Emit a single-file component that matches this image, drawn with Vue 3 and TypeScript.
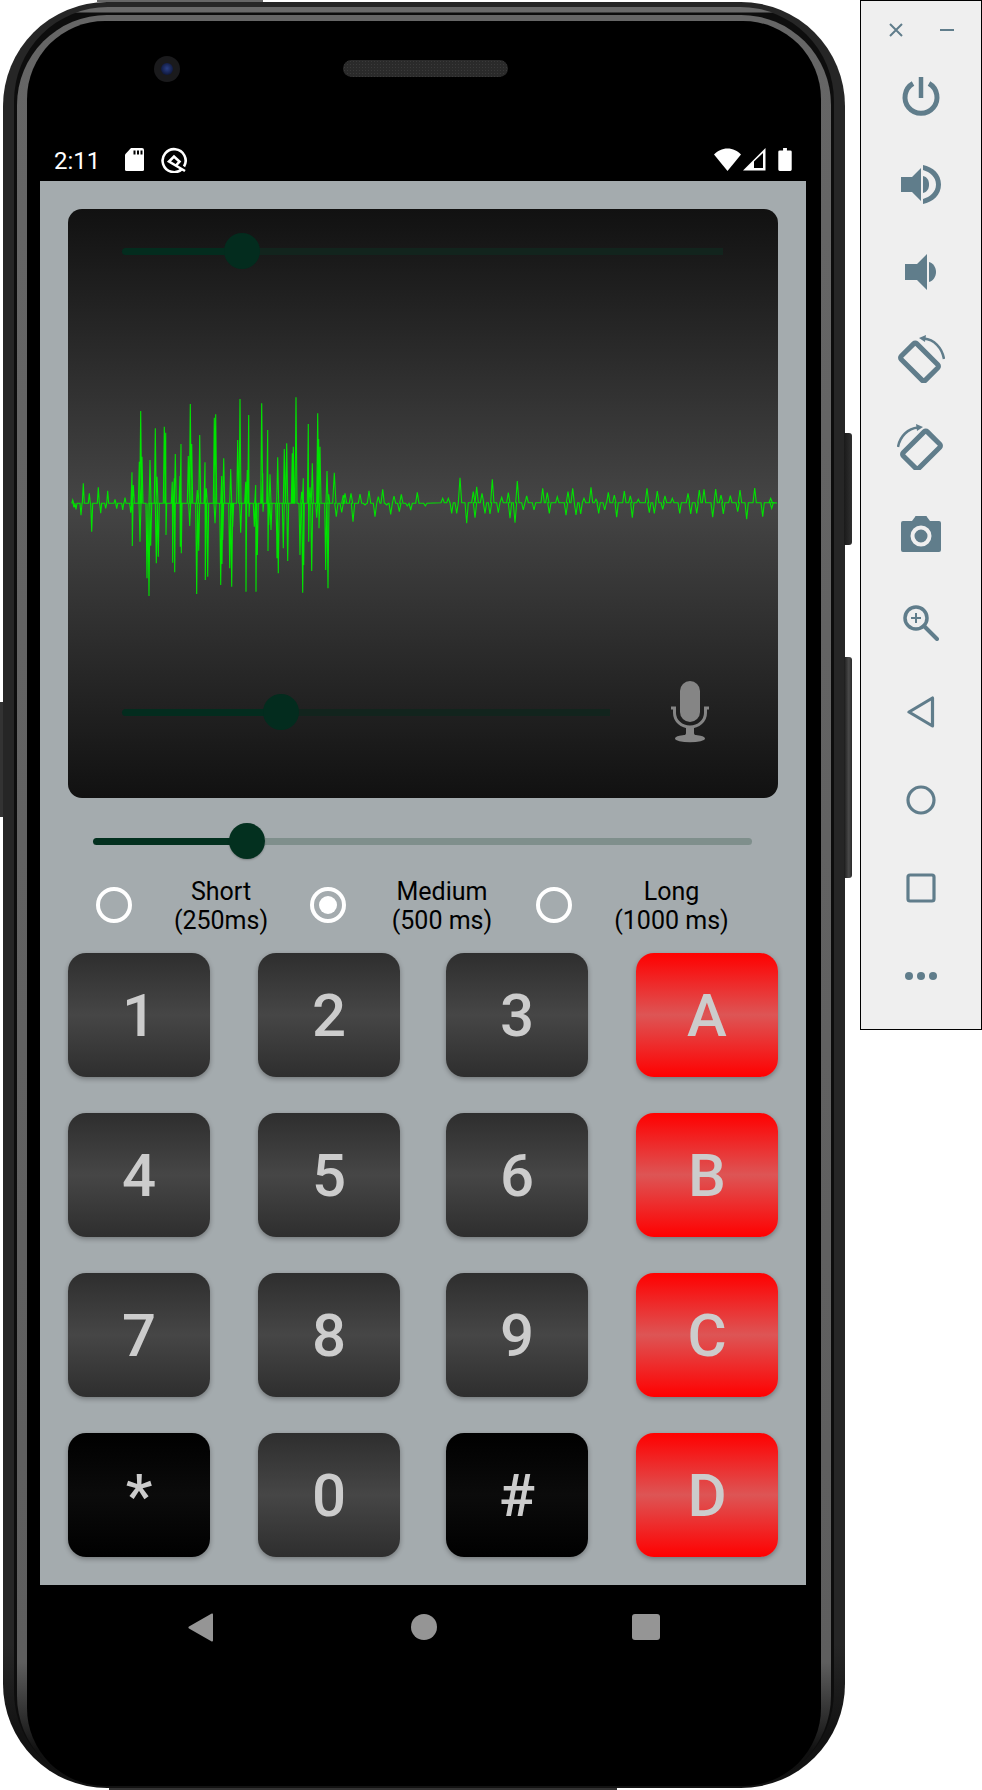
<script setup lang="ts">
// x, then one or more y values of the peak, units are 1/3 px of the capture
type Spike = [number, ...number[]]

const keys = [
  { label: '1', kind: 'dark' }, { label: '2', kind: 'dark' }, { label: '3', kind: 'dark' }, { label: 'A', kind: 'red' },
  { label: '4', kind: 'dark' }, { label: '5', kind: 'dark' }, { label: '6', kind: 'dark' }, { label: 'B', kind: 'red' },
  { label: '7', kind: 'dark' }, { label: '8', kind: 'dark' }, { label: '9', kind: 'dark' }, { label: 'C', kind: 'red' },
  { label: '*', kind: 'black' }, { label: '0', kind: 'dark' }, { label: '#', kind: 'black' }, { label: 'D', kind: 'red' },
]

const durations = [
  { top: 'Short', bottom: '(250ms)', selected: false },
  { top: 'Medium', bottom: '(500 ms)', selected: true },
  { top: 'Long', bottom: '(1000 ms)', selected: false },
]

const burst: Spike[] = [
  [38, 390], [42, 412], [48, 418], [63, 436], [70, 340], [88, 370], [95, 485], [115, 352], [122, 430], [137, 415], [143, 362], [165, 388], [170, 416], [188, 420], [195, 383],
  [212, 428], [216, 307, 528], [220, 345], [238, 275], [240, 515], [242, 123], [246, 260], [261, 625], [267, 678], [270, 270], [272, 527], [286, 175], [289, 580], [291, 320], [295, 560], [313, 170], [317, 188, 495],
  [337, 335, 578], [343, 325, 607], [346, 252], [360, 318, 530], [363, 222, 550], [385, 258], [389, 468], [391, 102], [395, 222], [410, 672], [412, 360], [416, 542], [419, 195], [435, 277, 630], [439, 355], [443, 620],
  [463, 143], [465, 460], [467, 133], [482, 645], [485, 318, 582], [488, 510], [491, 265], [509, 595], [512, 297], [515, 650], [518, 470], [533, 210], [540, 87], [542, 488], [557, 335, 665], [562, 300], [566, 135, 440],
  [583, 470], [587, 345, 665], [592, 555], [605, 100], [608, 310, 425], [623, 180, 543], [626, 465], [630, 313], [633, 480], [650, 490, 565], [653, 262], [655, 610], [670, 535], [673, 237], [680, 220], [683, 573], [697, 250], [700, 230], [708, 82],
  [720, 555], [725, 365], [728, 668], [730, 325, 585], [745, 162, 515], [750, 352], [755, 603], [757, 280], [770, 443], [773, 130], [776, 207, 475], [780, 230], [797, 600], [801, 303], [804, 655], [806, 373],
]
const ripple: Spike[] = [
  [823, 308], [829, 440], [845, 427], [850, 375], [855, 370], [873, 370], [879, 455], [900, 372], [915, 405], [927, 362], [945, 440], [955, 380], [968, 358], [980, 405], [992, 433], [1002, 378], [1018, 425], [1024, 373], [1042, 408], [1052, 420], [1072, 367], [1096, 408],
]
const tail: Spike[] = [
  [8, 175], [25, 175], [35, 220], [50, 220], [60, 113], [80, 250], [100, 155], [105, 233], [110, 140], [126, 160], [135, 220], [150, 222], [157, 118], [175, 218], [185, 172], [205, 158], [210, 235], [225, 248], [232, 123], [250, 210], [260, 168], [282, 210], [308, 145], [322, 158], [328, 220], [352, 170], [378, 226], [384, 155], [398, 145], [408, 225], [422, 222], [432, 175], [453, 142], [468, 178], [476, 220], [494, 210], [505, 157], [523, 165], [530, 232], [553, 153], [571, 168], [577, 233], [595, 178], [621, 145], [628, 218], [643, 220], [652, 153], [668, 208], [675, 168], [697, 175], [719, 220], [744, 160], [752, 222], [770, 220], [778, 150], [792, 148], [818, 232], [827, 147], [843, 165], [850, 222], [871, 167], [893, 215], [900, 150], [920, 238], [944, 144], [968, 230], [992, 175], [995, 205],
]

function trace(list: Spike[], originX: number, originY: number, baseY: number, half: number) {
  const pts: string[] = []
  const px = (x: number) => (originX + x / 3 - 68).toFixed(1)
  const py = (y: number) => (originY + y / 3 - 380).toFixed(1)
  for (const [x, ...ys] of list) {
    pts.push(`${px(x - half)},${py(baseY)}`)
    ys.forEach((y, i) => pts.push(`${px(x + i)},${py(y)}`))
    pts.push(`${px(x + half)},${py(baseY)}`)
  }
  return pts
}

const wavePoints = [
  ...trace(burst, 60, 370, 400, 3),
  ...trace(ripple, 60, 370, 400, 5),
  ...trace(tail, 440, 440, 188, 5),
  '709,123',
].join(' ')
</script>

<template>
  <div class="page">
    <div class="phone">
      <span class="side-btn btn-left"></span>
      <span class="side-btn btn-power"></span>
      <span class="side-btn btn-volume"></span>
      <span class="edge edge-top"></span>
      <span class="edge edge-bottom"></span>
      <div class="rim">
        <div class="bezel">
          <div class="face">
            <div class="top-area">
              <div class="camera"><span class="lens"></span></div>
              <div class="speaker"></div>
            </div>

            <!-- status bar -->
            <div class="status-bar">
              <div class="status-left">
                <span class="clock">2:11</span>
                <svg class="sd-icon" width="19" height="23" viewBox="0 0 19 23">
                  <path d="M6 0h11a2 2 0 0 1 2 2v19.500a1.500 1.500 0 0 1-1.500 1.500h-16a1.500 1.500 0 0 1-1.500-1.500V6.500z" fill="#fff"/>
                  <path d="M8.500 2.500h2v4h-2zM12 2.500h2v4h-2zM15.500 2.500h2v4h-2z" fill="#000"/>
                </svg>
                <svg width="26" height="26" viewBox="0 0 26 26" fill="none" stroke="#fff" stroke-width="2.600">
                  <path d="M21 22A11.500 11.500 0 1 1 23 19.500"/>
                  <path d="M24 24 8 14.500 13 9.500l5.500 5-3.500 4"/>
                </svg>
              </div>
              <div class="status-right">
                <svg width="27" height="23" viewBox="0 0 27 23"><path d="M13.500 23 0 6.500C3.500 3 8 .5 13.500.5S23.500 3 27 6.500z" fill="#fff"/></svg>
                <svg width="23" height="23" viewBox="0 0 23 23">
                  <path d="M0 22.500 22.500 0v22.500z" fill="#fff"/>
                  <path d="M11 20V13.500L20 5v15z" fill="#000"/>
                </svg>
                <svg width="14" height="23" viewBox="0 0 14 24">
                  <path d="M5 0h4v2.500h3.500A1.500 1.500 0 0 1 14 4v18.500a1.500 1.500 0 0 1-1.500 1.500h-11A1.500 1.500 0 0 1 0 22.500V4a1.500 1.500 0 0 1 1.500-1.500H5z" fill="#fff"/>
                </svg>
              </div>
            </div>

            <!-- app screen -->
            <div class="screen">
              <div class="scope">
                <div class="scope-slider top-slider">
                  <div class="track-fill fill-top"></div>
                  <div class="thumb"></div>
                  <div class="track-rest"></div>
                </div>
                <svg class="wave" width="709" height="240" viewBox="0 0 709 240">
                  <polyline :points="wavePoints" fill="none" stroke="#00e400" stroke-width="1.1"/>
                </svg>
                <div class="scope-bottom">
                  <div class="scope-slider bottom-slider">
                    <div class="track-fill fill-bottom"></div>
                    <div class="thumb"></div>
                    <div class="track-rest"></div>
                  </div>
                  <svg class="mic" width="40" height="62" viewBox="0 0 40 62">
                    <rect x="10" y="0" width="20" height="41" rx="10" fill="#858585"/>
                    <path d="M1 27h3.500v5a15.500 14 0 0 0 31 0v-5H39" fill="none" stroke="#858585" stroke-width="3"/>
                    <path d="M16 46h8v6c0 1.500 1 2 3 3H13c2-1 3-1.500 3-3z" fill="#858585"/>
                    <ellipse cx="20" cy="57.500" rx="15" ry="3.800" fill="#858585"/>
                  </svg>
                </div>
              </div>

              <div class="main-slider">
                <div class="main-fill"></div>
                <div class="main-thumb"></div>
                <div class="main-rest"></div>
              </div>

              <div class="radio-row">
                <div v-for="d in durations" :key="d.top" class="radio-item">
                  <span class="radio" :class="{ on: d.selected }"></span>
                  <span class="radio-label">{{ d.top }}<br>{{ d.bottom }}</span>
                </div>
              </div>

              <div class="keypad">
                <button v-for="k in keys" :key="k.label" type="button" class="key" :class="`key-${k.kind}`">{{ k.label }}</button>
              </div>
            </div>

            <!-- nav bar -->
            <div class="nav-bar">
              <svg width="26" height="29" viewBox="0 0 26 29"><path d="M25 1.500v26a1 1 0 0 1-1.700.7L1 15.500a1.300 1.300 0 0 1 0-2L23.300.800a1 1 0 0 1 1.700.7z" fill="#959595"/></svg>
              <span class="nav-dot"></span>
              <span class="nav-square"></span>
            </div>
          </div>
        </div>
      </div>
    </div>

    <!-- emulator toolbar -->
    <aside class="toolbar">
      <div class="win-row">
        <svg width="16" height="16" viewBox="0 0 16 16" stroke="#607d8b" stroke-width="2"><path d="M2 2l12 12M14 2 2 14"/></svg>
        <svg width="16" height="16" viewBox="0 0 16 16" stroke="#607d8b" stroke-width="2"><path d="M1 8h14"/></svg>
      </div>
      <div class="tools">
        <svg width="40" height="40" viewBox="0 0 40 40" fill="none" stroke="#607d8b" stroke-width="5">
          <path d="M12 7.500a16 16 0 1 0 16 0"/><path d="M20 1v21" stroke-width="4.500"/>
        </svg>
        <svg width="40" height="40" viewBox="0 0 40 40" fill="#607d8b">
          <path d="M0 13h11L20 4v33l-9-9H0z"/>
          <path d="M22 12c4 1 6 4 6 8.500s-2 7.500-6 8.500z"/>
          <path d="M22 1c10 2 18 9 18 19.500S32 38 22 40v-5c7-2 13-7 13-14.500S29 8 22 6z"/>
        </svg>
        <svg width="40" height="40" viewBox="0 0 40 40" fill="#607d8b">
          <path d="M4 12h12L26 2v36L16 28H4z"/>
          <path d="M28 10c4 1 7 5 7 10s-3 9-7 10z"/>
        </svg>
        <svg width="48" height="48" viewBox="0 0 48 48" fill="none" stroke="#607d8b">
          <rect x="11.500" y="10" width="22" height="34" rx="2" transform="rotate(-45 22.500 27)" stroke-width="5"/>
          <path d="M27 3.500c10 1 18 9 20 20.500" stroke-width="2.500"/>
          <path d="M22 3l7-3-1 7z" fill="#607d8b" stroke="none"/>
        </svg>
        <svg width="48" height="48" viewBox="0 0 48 48" fill="none" stroke="#607d8b">
          <rect x="13.500" y="11" width="22" height="34" rx="2" transform="rotate(45 24.500 28)" stroke-width="5"/>
          <path d="M21 5.500C11 6.500 3 14 1 25" stroke-width="2.500"/>
          <path d="M26 5l-7-3 1 7z" fill="#607d8b" stroke="none"/>
        </svg>
        <svg width="40" height="36" viewBox="0 0 40 36">
          <path d="M2 5h9l3-4a1 1 0 0 1 1-1h10a1 1 0 0 1 1 1l3 4h9a2 2 0 0 1 2 2v27a2 2 0 0 1-2 2H2a2 2 0 0 1-2-2V7a2 2 0 0 1 2-2z" fill="#607d8b"/>
          <circle cx="20" cy="20" r="8.500" fill="none" stroke="#efefef" stroke-width="4"/>
        </svg>
        <svg width="36" height="36" viewBox="0 0 36 36" fill="none" stroke="#607d8b">
          <circle cx="13" cy="13" r="11" stroke-width="3.500"/>
          <path d="M21 21l13 13" stroke-width="4" stroke-linecap="round"/>
          <path d="M8 13h10M13 8v10" stroke-width="2"/>
        </svg>
        <svg width="28" height="32" viewBox="0 0 28 32" fill="none" stroke="#607d8b" stroke-width="3.200" stroke-linejoin="round"><path d="M25.500 2v28L2 16z"/></svg>
        <svg width="30" height="30" viewBox="0 0 30 30" fill="none" stroke="#607d8b" stroke-width="3.200"><circle cx="15" cy="15" r="13"/></svg>
        <svg width="30" height="30" viewBox="0 0 30 30" fill="none" stroke="#607d8b" stroke-width="3.200"><rect x="2" y="2" width="26" height="26" rx="2"/></svg>
        <svg width="34" height="10" viewBox="0 0 34 10" fill="#607d8b"><circle cx="5" cy="5" r="4"/><circle cx="17" cy="5" r="4"/><circle cx="29" cy="5" r="4"/></svg>
      </div>
    </aside>
  </div>
</template>

<style scoped>
.page {
  width: 982px;
  height: 1790px;
  position: relative;
  background: #fff;
  font-family: Roboto, "Liberation Sans", sans-serif;
  overflow: hidden;
}

/* ── phone shell ── */
.phone {
  position: absolute;
  left: 3px;
  top: 2px;
  width: 842px;
  height: 1786px;
  box-sizing: border-box;
  padding: 5px 11px 2px;
  background: linear-gradient(#262626 92%, #121212 97%);
  border-radius: 104px;
}

.side-btn {
  position: absolute;
  width: 8px;
  background: #222;
}
.btn-left { left: -3px; top: 700px; width: 3px; height: 115px; background: #333; }
.btn-power { right: -7px; top: 431px; height: 112px; border-radius: 0 3px 3px 0; background: linear-gradient(90deg, #1a1a1a, #303030); }
.btn-volume { right: -7px; top: 655px; height: 221px; border-radius: 0 3px 3px 0; background: linear-gradient(90deg, #1c1c1c, #4a4a4a 60%, #2a2a2a); }

.edge { position: absolute; height: 2px; }
.edge-top { left: 94px; top: -2px; width: 166px; background: #666; }
.edge-bottom { left: 106px; bottom: -2px; width: 508px; background: #333; }

.rim {
  height: 100%;
  box-sizing: border-box;
  padding: 8px 3px 0;
  background: linear-gradient(#6a6a6a 5px, #0d0d0d 6px);
  border-radius: 94px;
}

.bezel {
  height: 100%;
  box-sizing: border-box;
  padding: 6px 10px 0;
  background: linear-gradient(#666 0, #5e5e5e 93%, #111 98%);
  border-radius: 90px;
}

.face {
  height: 100%;
  background: #000;
  border-radius: 78px;
  display: flex;
  flex-direction: column;
  padding: 0 15px 0 13px;
  box-sizing: border-box;
}

.top-area {
  height: 117px;
  flex-shrink: 0;
  position: relative;
  display: flex;
  justify-content: center;
}
.camera {
  position: absolute;
  left: 114px;
  top: 35px;
  width: 26px;
  height: 26px;
  border-radius: 50%;
  background: #1a1a1c;
  display: flex;
  align-items: center;
  justify-content: center;
}
.lens {
  width: 12px;
  height: 12px;
  border-radius: 50%;
  background: radial-gradient(circle at 50% 45%, #2a3f85, #0b1230 85%);
}
.speaker {
  margin: 39px 0 0 4px;
  width: 165px;
  height: 17px;
  border-radius: 9px;
  background: #2a2a2a radial-gradient(#3a3a3a 0.6px, transparent 0.8px) 0 0 / 3px 3px;
}

.status-bar {
  height: 43px;
  display: flex;
  align-items: center;
  justify-content: space-between;
  padding: 0 14px;
  flex-shrink: 0;
}
.status-left, .status-right { display: flex; align-items: center; }
.clock { color: #fff; font-size: 24px; width: 71px; line-height: 26px; padding-top: 2px; }
.sd-icon { margin-right: 17px; }
.status-right { gap: 2px; }
.status-right svg:last-child { margin-left: 10px; }

/* ── app ── */
.screen {
  height: 1404px;
  background: #a4abae;
  padding: 28px;
  box-sizing: border-box;
  flex-shrink: 0;
  width: 766px;
}

.scope {
  height: 589px;
  border-radius: 14px;
  background: linear-gradient(#111 0%, #454545 50%, #111 100%);
  box-sizing: border-box;
  padding-top: 24px;
  overflow: hidden;
}

.scope-slider {
  display: flex;
  align-items: center;
  height: 36px;
  margin-left: 54px;
}
.top-slider { width: 601px; }
.track-fill { height: 7px; background: #032c1e; border-radius: 4px 0 0 4px; margin-right: -12px; flex-shrink: 0; }
.fill-top { width: 114px; }
.fill-bottom { width: 153px; }
.thumb { width: 36px; height: 36px; border-radius: 50%; background: #032c1e; flex-shrink: 0; margin-right: -8px; position: relative; }
.track-rest { height: 7px; flex: 1; background: #12241d; }

.wave { display: block; margin-top: 111px; }

.scope-bottom {
  display: flex;
  align-items: center;
  margin-top: 61px;
  height: 62px;
}
.bottom-slider { width: 488px; flex-shrink: 0; }
.mic { margin-left: 60px; }

.main-slider {
  display: flex;
  align-items: center;
  height: 36px;
  margin: 25px 26px 0 25px;
}
.main-fill { width: 154px; height: 7px; background: #03301f; border-radius: 4px 0 0 4px; margin-right: -18px; flex-shrink: 0; }
.main-thumb { width: 36px; height: 36px; border-radius: 50%; background: #03301f; flex-shrink: 0; box-shadow: 0 1px 2px rgba(0,0,0,0.25); position: relative; }
.main-rest { flex: 1; height: 7px; background: #7f8f8c; border-radius: 0 4px 4px 0; }

.radio-row {
  display: grid;
  grid-template-columns: 214px 226px 1fr;
  margin: 16px 0 0 28px;
  height: 58px;
}
.radio-item { display: flex; align-items: center; }
.radio {
  width: 36px;
  height: 36px;
  box-sizing: border-box;
  border: 4px solid #fff;
  border-radius: 50%;
  flex-shrink: 0;
  display: flex;
  align-items: center;
  justify-content: center;
}
.radio.on::after {
  content: '';
  width: 18px;
  height: 18px;
  border-radius: 50%;
  background: #fff;
}
.radio-label {
  flex: 1;
  text-align: center;
  font-size: 25px;
  line-height: 29px;
  padding-top: 2px;
  color: #000;
  white-space: nowrap;
}
.radio-item:nth-child(2) .radio-label { padding-left: 2px; }
.radio-item:nth-child(3) .radio-label { padding-right: 7px; }

.keypad {
  margin-top: 20px;
  display: grid;
  grid-template-columns: 190px 188px 190px 142px;
  grid-auto-rows: 124px;
  row-gap: 36px;
}
.key {
  width: 142px;
  border: none;
  padding: 0;
  border-radius: 18px;
  font-family: inherit;
  font-size: 60px;
  font-weight: 500;
  color: #ccc;
  box-shadow: 0 2px 5px rgba(0,0,0,0.3);
}
.key-dark { background: linear-gradient(#2e2e2e, #464646 50%, #2e2e2e); }
.key-red { background: linear-gradient(#ff0000, #dd5555 50%, #ff0000); }
.key-black { background: linear-gradient(#000, #0b0b0b 50%, #000); }

.nav-bar {
  height: 84px;
  display: flex;
  align-items: center;
  padding-left: 148px;
  flex-shrink: 0;
}
.nav-dot { width: 26px; height: 26px; border-radius: 50%; background: #959595; margin-left: 197px; }
.nav-square { width: 28px; height: 26px; border-radius: 3px; background: #959595; margin-left: 195px; }

/* ── toolbar ── */
.toolbar {
  position: absolute;
  left: 860px;
  top: 0;
  width: 122px;
  height: 1030px;
  box-sizing: border-box;
  background: #efefef;
  border: 1px solid #000;
}
.win-row {
  display: flex;
  justify-content: space-between;
  padding: 21px 26px 0 27px;
}
.tools {
  display: flex;
  flex-direction: column;
  align-items: center;
  margin-top: 38px;
}
.tools svg { display: block; }
.tools svg:nth-child(2) { margin-top: 48px; }
.tools svg:nth-child(3) { margin-top: 48px; }
.tools svg:nth-child(4) { margin-top: 43px; }
.tools svg:nth-child(5) { margin-top: 39px; }
.tools svg:nth-child(6) { margin-top: 46px; }
.tools svg:nth-child(7) { margin-top: 53px; }
.tools svg:nth-child(8) { margin-top: 55px; }
.tools svg:nth-child(9) { margin-top: 57px; }
.tools svg:nth-child(10) { margin-top: 58px; }
.tools svg:nth-child(11) { margin-top: 68px; }
</style>
